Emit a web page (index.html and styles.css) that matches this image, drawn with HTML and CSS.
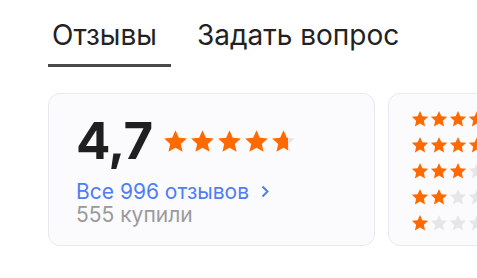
FILE: index.html
```html
<!DOCTYPE html>
<html lang="ru">
<head>
    <meta charset="UTF-8">
    <meta name="viewport" content="width=device-width, initial-scale=1.0">
    <title>Отзывы</title>
    <link rel="stylesheet" href="styles.css">
</head>
<body>
    <svg width="0" height="0" class="defs">
        <defs>
            <symbol id="star" viewBox="0 0 24 24">
                <path d="M12 1.2l3.2 7.1 7.7.8-5.8 5.2 1.7 7.6L12 18l-6.8 3.9 1.7-7.6-5.8-5.2 7.7-.8z"/>
            </symbol>
            <linearGradient id="part">
                <stop offset="68%" stop-color="#ff6a00"/>
                <stop offset="68%" stop-color="#e6e6e6"/>
            </linearGradient>
        </defs>
    </svg>

    <div class="tabs">
        <a href="#" class="tab active">Отзывы</a>
        <a href="#" class="tab">Задать вопрос</a>
    </div>

    <div class="cards">
        <div class="card summary">
            <div class="score">
                <span class="score-num">4,7</span>
                <div class="stars big">
                    <svg class="on"><use href="#star"/></svg>
                    <svg class="on"><use href="#star"/></svg>
                    <svg class="on"><use href="#star"/></svg>
                    <svg class="on"><use href="#star"/></svg>
                    <svg class="part"><use href="#star"/></svg>
                </div>
            </div>
            <a href="#" class="all-link">Все 996 отзывов
                <svg class="chev" viewBox="0 0 8 12"><path d="M1.5 1l5 5-5 5"/></svg>
            </a>
            <div class="bought">555 купили</div>
        </div>

        <div class="card breakdown">
            <div class="stars small" data-n="5"></div>
            <div class="stars small" data-n="4"></div>
            <div class="stars small" data-n="3"></div>
            <div class="stars small" data-n="2"></div>
            <div class="stars small" data-n="1"></div>
        </div>
    </div>

    <script>
        let rows = document.querySelectorAll('.breakdown .stars');
        for (let row of rows) {
            let n = Number(row.dataset.n);
            let html = '';
            for (let i = 0; i < 5; i++) {
                html += '<svg class="' + (i < n ? 'on' : 'off') + '"><use href="#star"/></svg>';
            }
            row.innerHTML = html;
        }
    </script>
</body>
</html>
```

FILE: styles.css
```css
* {
    margin: 0;
    padding: 0;
    box-sizing: border-box;
}
body {
    font-family: 'Inter', 'Noto Sans', sans-serif;
    background: #fff;
    color: #1f1f1f;
    overflow: hidden;
}
a {
    text-decoration: none;
    color: inherit;
}
.defs {
    position: absolute;
}
.tabs {
    display: flex;
    gap: 22px;
    padding: 18px 0 0 48px;
}
.tab {
    font-size: 28px;
    line-height: 34px;
    padding: 0 14px 12px 4px;
    border-bottom: 3px solid transparent;
    color: #222;
}
.tab.active {
    border-bottom-color: #4a4a4a;
}
.cards {
    display: flex;
    gap: 13px;
    padding: 26px 0 0 48px;
}
.card {
    flex-shrink: 0;
    height: 153px;
    border: 1px solid #e8e8ef;
    border-radius: 12px;
    background: #fbfbfd;
}
.summary {
    width: 327px;
    padding: 19px 0 0 27px;
}
.score {
    display: flex;
    align-items: center;
    gap: 10px;
}
.score-num {
    font-size: 51px;
    font-weight: 700;
    line-height: 56px;
    letter-spacing: -0.5px;
    color: #1f1f1f;
}
.stars {
    display: flex;
}
.stars svg {
    fill: #ff6a00;
}
.stars svg.off {
    fill: #e6e6e6;
}
.stars svg.part {
    fill: url(#part);
}
.big {
    gap: 2px;
}
.big svg {
    width: 25px;
    height: 25px;
}
.all-link {
    display: flex;
    align-items: center;
    gap: 12px;
    margin-top: 11px;
    font-size: 21px;
    line-height: 23px;
    color: #4f7df5;
}
.chev {
    width: 8px;
    height: 13px;
    fill: none;
    stroke: #4f7df5;
    stroke-width: 2;
}
.bought {
    font-size: 21px;
    line-height: 23px;
    color: #9a9a9e;
}
.breakdown {
    width: 200px;
    padding: 16px 0 0 22px;
    display: flex;
    flex-direction: column;
    gap: 8px;
}
.small {
    gap: 1px;
}
.small svg {
    width: 18px;
    height: 18px;
}
```
